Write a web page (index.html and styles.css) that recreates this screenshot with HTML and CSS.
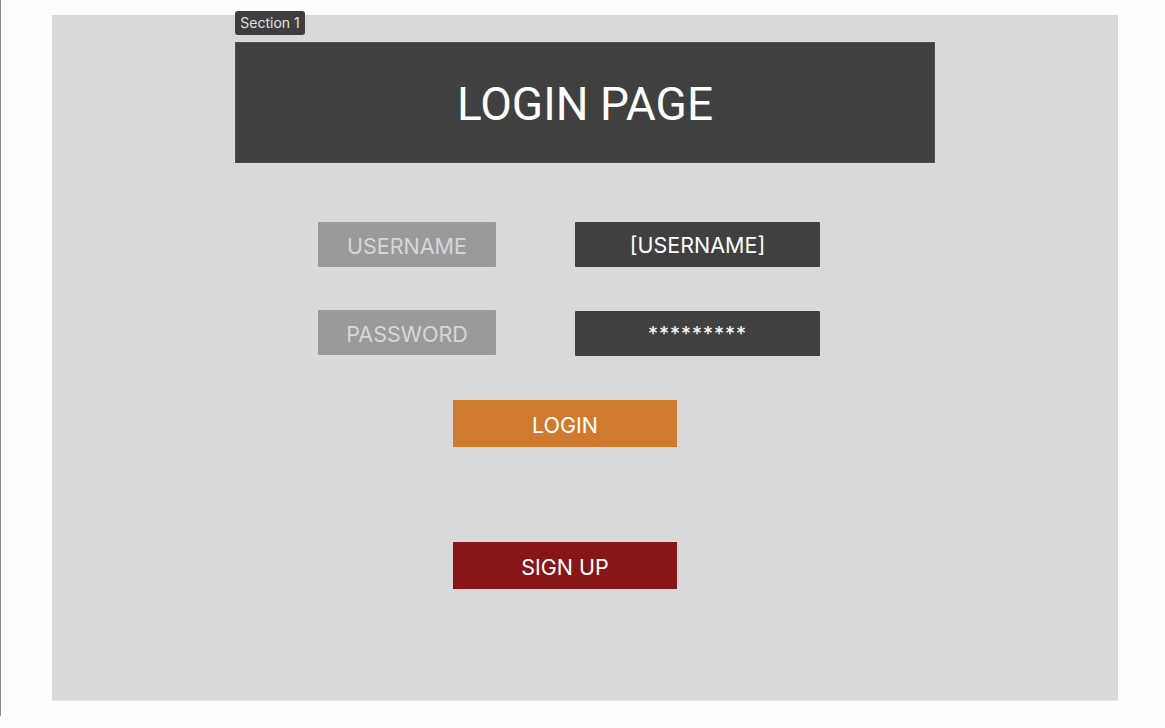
FILE: index.html
```html
<!DOCTYPE html>
<html>
<head>
<meta charset="utf-8">
<link rel="stylesheet" href="styles.css">
</head>
<body>
<div class="page">
  <div class="edge"></div>
  <div class="frame">
    <div class="column">
      <div class="badge">Section 1</div>
      <div class="header">LOGIN PAGE</div>
      <div class="row">
        <div class="label">USERNAME</div>
        <div class="field">[USERNAME]</div>
      </div>
      <div class="row row2">
        <div class="label">PASSWORD</div>
        <div class="field pw">*********</div>
      </div>
      <div class="btn login">LOGIN</div>
      <div class="btn signup">SIGN UP</div>
    </div>
  </div>
</div>
</body>
</html>
```
FILE: styles.css
```css
html, body {
  margin: 0;
  padding: 0;
  background: #fdfdfd;
  font-family: Inter, "Noto Sans", sans-serif;
}
.page {
  display: flex;
  width: 1165px;
  height: 728px;
}
.edge {
  width: 1px;
  height: 716px;
  background: #8a8a8a;
}
.frame {
  margin-left: 51px;
  margin-top: 15px;
  width: 1066px;
  height: 686px;
  background: #d9d9d9;
  border-bottom: 1px solid #e6e6e6;
  box-sizing: border-box;
}
.column {
  position: relative;
  margin-left: 183px;
  width: 700px;
  padding-top: 27px;
}
.badge {
  position: absolute;
  left: 0;
  top: -4px;
  width: 70px;
  height: 24px;
  box-sizing: border-box;
  background: #3e3e3e;
  border-radius: 3px;
  color: #e0e0e0;
  font-size: 14px;
  line-height: 24px;
  text-align: center;
}
.header {
  height: 121px;
  background: #404040;
  color: #ffffff;
  font-family: Roboto, Inter, sans-serif;
  font-size: 46px;
  padding-top: 2px;
  display: flex;
  align-items: center;
  justify-content: center;
  border: 1px solid #505050;
  box-sizing: border-box;
}
.row {
  display: flex;
  gap: 79px;
  margin-left: 83px;
  margin-top: 59px;
  align-items: flex-start;
}
.row2 {
  margin-top: 43px;
}
.label {
  width: 178px;
  height: 45px;
  background: #9a9a9a;
  color: #d6d6d6;
  font-size: 21.5px;
  padding-top: 2px;
  box-sizing: border-box;
  display: flex;
  align-items: center;
  justify-content: center;
  border-radius: 1px;
}
.field {
  width: 245px;
  height: 45px;
  background: #404040;
  color: #ffffff;
  font-size: 21.5px;
  display: flex;
  align-items: center;
  justify-content: center;
  border-radius: 1px;
}
.pw {
  margin-top: 1px;
  font-size: 20px;
  letter-spacing: 1px;
}
.btn {
  width: 224px;
  height: 47px;
  margin-left: 218px;
  color: #ffffff;
  font-size: 21.5px;
  padding-top: 2px;
  box-sizing: border-box;
  display: flex;
  align-items: center;
  justify-content: center;
}
.login {
  margin-top: 44px;
  background: #cf7a2e;
}
.signup {
  margin-top: 95px;
  background: #881517;
}
```
